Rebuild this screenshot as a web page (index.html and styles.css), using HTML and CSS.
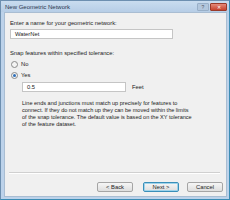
FILE: index.html
```html
<!DOCTYPE html>
<html>
<head>
<meta charset="utf-8">
<link rel="stylesheet" href="styles.css">
</head>
<body>
<div class="window">
  <div class="titlebar">
    <span class="title">New Geometric Network</span>
    <div class="caption-buttons">
      <span class="cap-btn help">?</span>
      <span class="cap-btn close">✕</span>
    </div>
  </div>
  <div class="client">
    <div class="content">
      <div class="label">Enter a name for your geometric network:</div>
      <div class="textbox name-box">WaterNet</div>
      <div class="label snap-label">Snap features within specified tolerance:</div>
      <div class="radio-row"><span class="radio"></span><span>No</span></div>
      <div class="radio-row"><span class="radio checked"></span><span>Yes</span></div>
      <div class="tol-row">
        <div class="textbox tol-box">0.5</div>
        <span class="unit">Feet</span>
      </div>
      <p class="desc">Line ends and junctions must match up precisely for features to<br>connect. If they do not match up they can be moved within the limits<br>of the snap tolerance. The default value is based on the XY tolerance<br>of the feature dataset.</p>
    </div>
    <div class="footer">
      <div class="sep"></div>
      <div class="buttons">
        <span class="btn back">&lt; Back</span>
        <span class="btn default">Next &gt;</span>
        <span class="btn cancel">Cancel</span>
      </div>
    </div>
  </div>
</div>
</body>
</html>
```
FILE: styles.css
```css
html, body {
  margin: 0;
  padding: 0;
  background: #ffffff;
}
.window {
  width: 230px;
  height: 200px;
  box-sizing: border-box;
  display: flex;
  flex-direction: column;
  background: #bcd2ea;
  border: 1px solid #6d8fb0;
  border-right-color: #3b8cb4;
  border-bottom-color: #3b8cb4;
  font-family: "Liberation Sans", Arial, sans-serif;
  font-size: 5.8px;
  color: #222;
}
.titlebar {
  height: 11px;
  display: flex;
  align-items: center;
  justify-content: space-between;
  padding: 0 2px 0 4px;
  background: linear-gradient(#c9dcef, #b6cde6);
}
.title {
  font-size: 6px;
  color: #2a3850;
}
.caption-buttons {
  display: flex;
  gap: 1px;
}
.cap-btn {
  height: 7px;
  width: 12px;
  display: flex;
  align-items: center;
  justify-content: center;
  font-size: 5px;
  border-radius: 1px;
}
.help {
  background: #b3c7dd;
  color: #556;
  border: 1px solid #98afc8;
  width: 10px;
  height: 6px;
}
.close {
  background: linear-gradient(#e48a7a, #c7432e);
  color: #fff;
  border: 1px solid #9a3a2a;
  width: 15px;
  height: 6px;
}
.client {
  flex: 1;
  margin: 0 2px 2px 3px;
  background: #f0f0f0;
  border: 1px solid #a9bdd2;
  display: flex;
  flex-direction: column;
}
.content {
  flex: 1;
  padding: 6px 0 0 5px;
}
.label {
  line-height: 8px;
}
.textbox {
  background: #fff;
  border: 1px solid #c5c5c5;
  box-sizing: border-box;
  height: 10px;
  line-height: 8px;
  padding-left: 4px;
}
.name-box {
  width: 163px;
  margin-top: 2px;
}
.snap-label {
  margin-top: 10px;
}
.radio-row {
  display: flex;
  align-items: center;
  gap: 3px;
  margin-top: 4px;
  margin-left: 1px;
  line-height: 7px;
}
.radio {
  width: 5px;
  height: 5px;
  border-radius: 50%;
  border: 1px solid #8a8a8a;
  background: #f4f4f4;
  position: relative;
}
.radio.checked::after {
  content: "";
  position: absolute;
  left: 1px;
  top: 1px;
  width: 3px;
  height: 3px;
  border-radius: 50%;
  background: #2f6fb8;
}
.tol-row {
  display: flex;
  align-items: center;
  gap: 6px;
  margin-top: 3px;
  margin-left: 12px;
}
.tol-box {
  width: 104px;
}
.desc {
  margin: 8px 2px 0 12px;
  line-height: 7px;
  font-size: 5.55px;
  white-space: nowrap;
}
.footer {
  padding: 0 0 4px 0;
}
.sep {
  height: 1px;
  background: #d0d0d0;
  border-bottom: 1px solid #fff;
  margin: 0 6px 0 4px;
}
.buttons {
  display: flex;
  justify-content: flex-end;
  gap: 8px;
  padding: 8px 3px 0 0;
}
.btn {
  width: 36px;
  height: 10px;
  box-sizing: border-box;
  border: 1px solid #a5a5a5;
  border-radius: 2px;
  background: linear-gradient(#f6f6f6, #dedede);
  display: flex;
  align-items: center;
  justify-content: center;
}
.btn.back {
  margin-right: 2px;
}
.btn.default {
  border-color: #3a8fb9;
  box-shadow: inset 0 0 0 1px #9fd3ea;
}
```
